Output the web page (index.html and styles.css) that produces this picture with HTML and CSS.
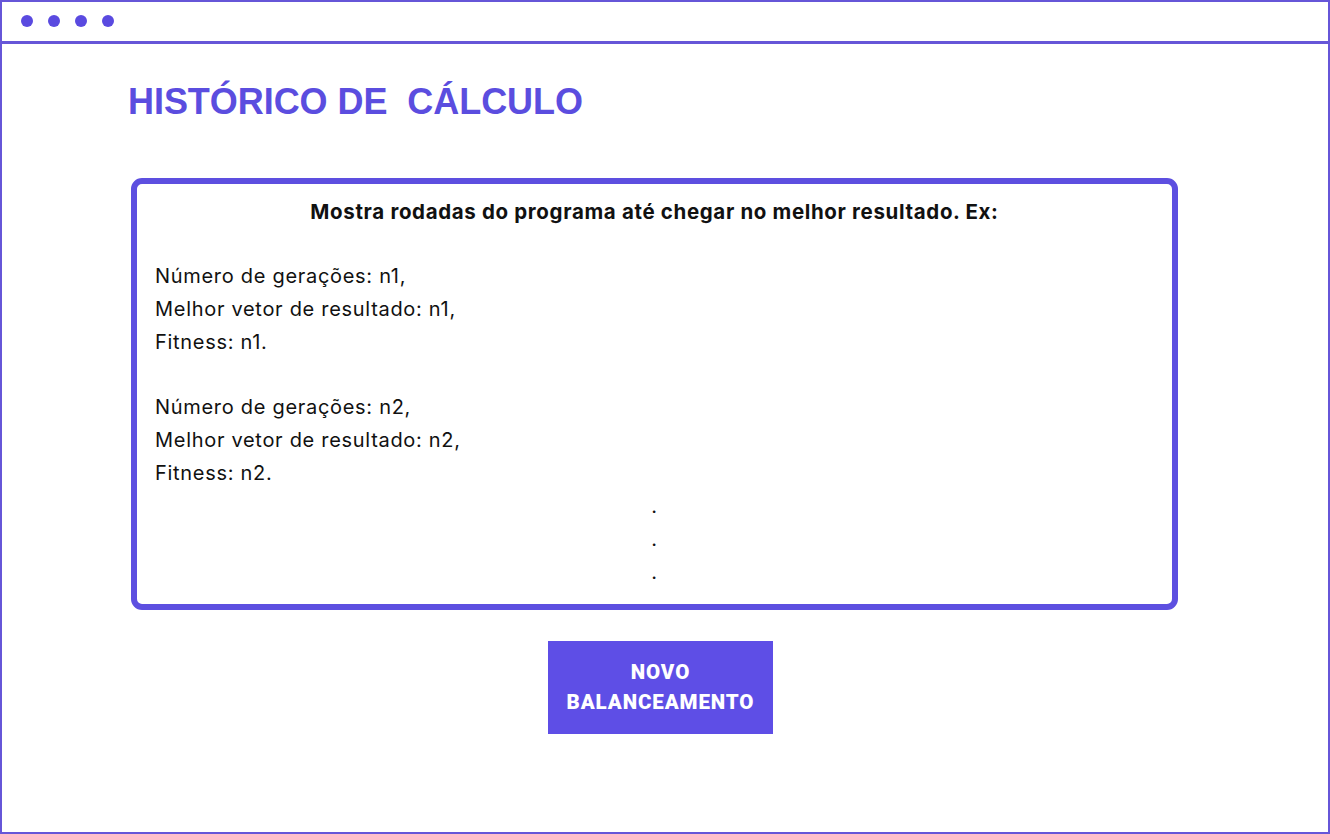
FILE: index.html
```html
<!DOCTYPE html>
<html lang="pt">
<head>
<meta charset="utf-8">
<title>Histórico de Cálculo</title>
<link rel="stylesheet" href="styles.css">
</head>
<body>
<div class="window">
  <div class="topbar">
    <span class="dot"></span><span class="dot"></span><span class="dot"></span><span class="dot"></span>
  </div>
  <main class="content">
    <h1 class="title">HISTÓRICO DE&nbsp; CÁLCULO</h1>
    <section class="panel">
      <p class="panel-head">Mostra rodadas do programa até chegar no melhor resultado. Ex:</p>
      <div class="round">
        <p>Número de gerações: n1,</p>
        <p>Melhor vetor de resultado: n1,</p>
        <p>Fitness: n1.</p>
      </div>
      <div class="round last">
        <p>Número de gerações: n2,</p>
        <p>Melhor vetor de resultado: n2,</p>
        <p>Fitness: n2.</p>
      </div>
      <div class="ellipsis">
        <p>.</p><p>.</p><p>.</p>
      </div>
    </section>
    <div class="actions">
      <button class="btn">NOVO<br>BALANCEAMENTO</button>
    </div>
  </main>
</div>
</body>
</html>
```
FILE: styles.css
```css
* { box-sizing: border-box; }
html, body { margin: 0; padding: 0; background: #fff; }
.window {
  width: 1330px;
  height: 834px;
  border: 2px solid #6656d8;
  display: flex;
  flex-direction: column;
}
.topbar {
  height: 42px;
  border-bottom: 3px solid #6656d8;
  display: flex;
  align-items: center;
  gap: 15px;
  padding-left: 19px;
  padding-bottom: 1px;
}
.dot {
  width: 12px;
  height: 12px;
  border-radius: 50%;
  background: #5a4ae0;
}
.content {
  padding-left: 126px;
  display: flex;
  flex-direction: column;
}
.title {
  margin: 36px 0 0 0;
  font-family: "Liberation Sans", Arial, sans-serif;
  font-weight: 700;
  font-size: 36px;
  line-height: 44px;
  color: #5b4ddf;
  letter-spacing: -0.05px;
}
.panel {
  margin: 54px 0 0 3px;
  width: 1047px;
  height: 432px;
  border: 6px solid #5d4fe0;
  border-radius: 11px;
  padding: 11px 18px 0 18px;
  font-family: "Inter", "Noto Sans", sans-serif;
  font-size: 20px;
  letter-spacing: 0.7px;
  color: #111;
}
.panel p { margin: 0; line-height: 33px; }
.panel-head {
  text-align: center;
  font-weight: 700;
  font-size: 20.5px;
  letter-spacing: 0.65px;
  margin-bottom: 32px !important;
}
.round { margin-bottom: 32px; }
.round.last { margin-bottom: 0; }
.ellipsis { text-align: center; }
.actions {
  display: flex;
  justify-content: flex-start;
  padding-left: 420px;
  margin-top: 31px;
}
.btn {
  width: 225px;
  height: 93px;
  background: #5e4ee6;
  border: none;
  color: #fff;
  font-family: "Roboto", "Liberation Sans", sans-serif;
  font-weight: 900;
  font-size: 20.5px;
  line-height: 30px;
  letter-spacing: 0.9px;
  padding: 0 0 2px 0;
}
```
